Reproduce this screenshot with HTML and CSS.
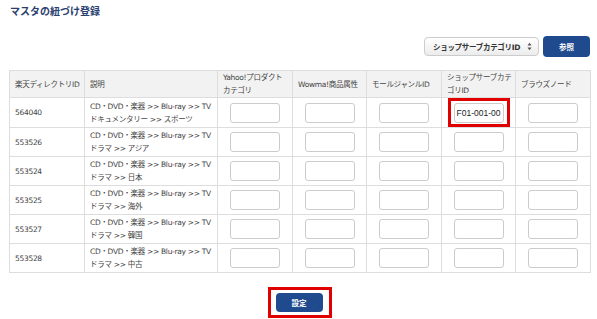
FILE: index.html
```html
<!DOCTYPE html>
<html lang="ja">
<head>
  <meta charset="UTF-8" />
  <title>マスタの紐づけ登録</title>
  <link rel="stylesheet" href="styles.css">
</head>
<body>
  <h1 class="titulo">マスタの紐づけ登録</h1>

  <div class="barra">
    <div class="selector">
      <span class="selector-texto">ショップサーブカテゴリID</span>
      <svg class="selector-flecha" width="5" height="9" viewBox="0 0 5 9">
        <path d="M0.5 3.5 L2.5 0.8 L4.5 3.5 Z M0.5 5.5 L2.5 8.2 L4.5 5.5 Z" fill="#555" />
      </svg>
    </div>
    <button class="btn btn-ref">参照</button>
  </div>

  <table class="tabla">
    <colgroup>
      <col style="width: 75px">
      <col style="width: 133px">
      <col style="width: 75px">
      <col style="width: 74px">
      <col style="width: 75px">
      <col style="width: 74px">
      <col style="width: 75px">
    </colgroup>
    <thead>
      <tr>
        <th>楽天ディレクトリID</th>
        <th>説明</th>
        <th>Yahoo!プロダクト<br>カテゴリ</th>
        <th>Wowma!商品属性</th>
        <th>モールジャンルID</th>
        <th>ショップサーブカテ<br>ゴリID</th>
        <th>ブラウズノード</th>
      </tr>
    </thead>
    <tbody>
      <tr>
        <td>564040</td>
        <td class="desc">CD・DVD・楽器 &gt;&gt; Blu-ray &gt;&gt; TV<br>ドキュメンタリー &gt;&gt; スポーツ</td>
        <td class="campo"><input type="text"></td>
        <td class="campo"><input type="text"></td>
        <td class="campo"><input type="text"></td>
        <td class="campo"><span class="marca marca-campo"><input type="text" value="F01-001-00"></span></td>
        <td class="campo"><input type="text"></td>
      </tr>
      <tr>
        <td>553526</td>
        <td class="desc">CD・DVD・楽器 &gt;&gt; Blu-ray &gt;&gt; TV<br>ドラマ &gt;&gt; アジア</td>
        <td class="campo"><input type="text"></td>
        <td class="campo"><input type="text"></td>
        <td class="campo"><input type="text"></td>
        <td class="campo"><input type="text"></td>
        <td class="campo"><input type="text"></td>
      </tr>
      <tr>
        <td>553524</td>
        <td class="desc">CD・DVD・楽器 &gt;&gt; Blu-ray &gt;&gt; TV<br>ドラマ &gt;&gt; 日本</td>
        <td class="campo"><input type="text"></td>
        <td class="campo"><input type="text"></td>
        <td class="campo"><input type="text"></td>
        <td class="campo"><input type="text"></td>
        <td class="campo"><input type="text"></td>
      </tr>
      <tr>
        <td>553525</td>
        <td class="desc">CD・DVD・楽器 &gt;&gt; Blu-ray &gt;&gt; TV<br>ドラマ &gt;&gt; 海外</td>
        <td class="campo"><input type="text"></td>
        <td class="campo"><input type="text"></td>
        <td class="campo"><input type="text"></td>
        <td class="campo"><input type="text"></td>
        <td class="campo"><input type="text"></td>
      </tr>
      <tr>
        <td>553527</td>
        <td class="desc">CD・DVD・楽器 &gt;&gt; Blu-ray &gt;&gt; TV<br>ドラマ &gt;&gt; 韓国</td>
        <td class="campo"><input type="text"></td>
        <td class="campo"><input type="text"></td>
        <td class="campo"><input type="text"></td>
        <td class="campo"><input type="text"></td>
        <td class="campo"><input type="text"></td>
      </tr>
      <tr>
        <td>553528</td>
        <td class="desc">CD・DVD・楽器 &gt;&gt; Blu-ray &gt;&gt; TV<br>ドラマ &gt;&gt; 中古</td>
        <td class="campo"><input type="text"></td>
        <td class="campo"><input type="text"></td>
        <td class="campo"><input type="text"></td>
        <td class="campo"><input type="text"></td>
        <td class="campo"><input type="text"></td>
      </tr>
    </tbody>
  </table>

  <div class="acciones">
    <span class="marca marca-btn"><button class="btn btn-set">設定</button></span>
  </div>
</body>
</html>
```

FILE: styles.css
```css
body {
  margin: 0;
  padding: 4px 7px 0 9px;
  background: #fff;
  font-family: "DejaVu Sans", "Noto Sans CJK JP", sans-serif;
  color: #444;
}

.titulo {
  margin: 0 0 0 1px;
  font-family: "Noto Sans CJK JP", sans-serif;
  font-size: 10px;
  line-height: 13px;
  font-weight: bold;
  color: #2a416f;
}

.barra {
  display: flex;
  justify-content: flex-end;
  align-items: center;
  gap: 4px;
  margin-top: 19px;
  margin-bottom: 13px;
}

.selector {
  box-sizing: border-box;
  display: flex;
  align-items: center;
  justify-content: space-between;
  width: 115px;
  height: 19px;
  padding: 0 6px 0 8px;
  border: 1px solid #ccc;
  border-radius: 4px;
  background: linear-gradient(#fff, #ececec);
}

.selector-texto {
  font-size: 7.5px;
  letter-spacing: -0.3px;
  font-weight: bold;
  color: #333;
  white-space: nowrap;
}

.btn {
  border: none;
  border-radius: 4px;
  background-color: #1f4a8e;
  color: #fff;
  font-family: "Noto Sans CJK JP", sans-serif;
  font-size: 7.5px;
  font-weight: bold;
  cursor: pointer;
  padding: 0;
}

.btn-ref {
  width: 47px;
  height: 21px;
}

.tabla {
  width: 581px;
  border-collapse: collapse;
  table-layout: fixed;
  font-size: 7.5px;
  letter-spacing: -0.3px;
}

.tabla th,
.tabla td {
  border: 1px solid #ddd;
  padding: 0 2px 0 5px;
  text-align: left;
  vertical-align: middle;
  line-height: 13px;
  white-space: nowrap;
  overflow: hidden;
}

.tabla th {
  height: 26px;
  background: #f2f2f2;
  font-weight: normal;
  color: #444;
}

.tabla td {
  height: 28px;
}

.tabla td.campo {
  text-align: center;
  padding: 0;
  line-height: 0;
}

.tabla input {
  box-sizing: border-box;
  width: 50px;
  height: 20px;
  border: 1px solid #ccc;
  border-radius: 3px;
  background: #fff;
  font-family: "Liberation Sans", sans-serif;
  font-size: 8.5px;
  letter-spacing: 0;
  color: #222;
  text-align: center;
  padding: 0;
  margin: 0;
  vertical-align: middle;
}

.marca {
  display: inline-flex;
  border: 3px solid #e00000;
}

.marca-campo {
  padding: 2px 3px 1px 3px;
  vertical-align: middle;
}

.acciones {
  display: flex;
  justify-content: center;
  margin-top: 14px;
}

.marca-btn {
  padding: 3px 6px 3px 5px;
}

.btn-set {
  width: 47px;
  height: 19px;
}
```
